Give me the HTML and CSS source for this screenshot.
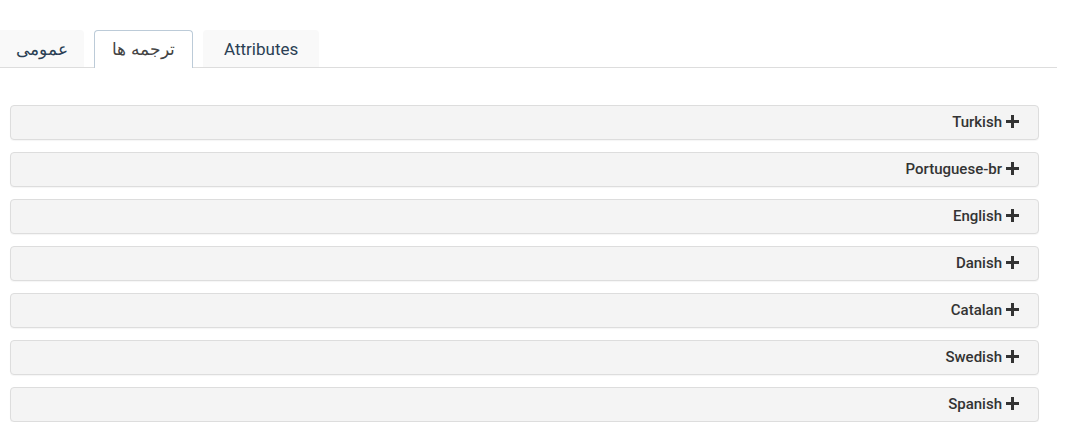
FILE: index.html
```html
<!DOCTYPE html>
<html lang="fa">
<head>
    <meta charset="UTF-8">
    <title>Translations</title>
    <link rel="stylesheet" href="styles.css">
</head>
<body>

    <!-- Tabs -->
    <div class="tabs">
        <a href="#" class="tab">عمومی</a>
        <a href="#" class="tab active">ترجمه ها</a>
        <a href="#" class="tab">Attributes</a>
    </div>

    <!-- Language panels -->
    <div class="panels">
        <div class="panel"><span>Turkish</span><b class="plus"></b></div>
        <div class="panel"><span>Portuguese-br</span><b class="plus"></b></div>
        <div class="panel"><span>English</span><b class="plus"></b></div>
        <div class="panel"><span>Danish</span><b class="plus"></b></div>
        <div class="panel"><span>Catalan</span><b class="plus"></b></div>
        <div class="panel"><span>Swedish</span><b class="plus"></b></div>
        <div class="panel"><span>Spanish</span><b class="plus"></b></div>
    </div>

</body>
</html>
```

FILE: styles.css
```css
body {
    font-family: Roboto, "DejaVu Sans", sans-serif;
    margin: 0;
    padding: 30px 0 0 0;
    background: #fff;
    color: #333;
}

/* Tabs */
.tabs {
    display: flex;
    gap: 10px;
    width: 1057px;
    border-bottom: 1px solid #dddddd;
}

.tab {
    display: block;
    height: 37px;
    line-height: 36px;
    padding: 0 20px;
    font-size: 17px;
    color: #2a3f54;
    text-decoration: none;
    background: #f9f9f9;
    border: 1px solid #f9f9f9;
    border-bottom: none;
    border-radius: 4px 4px 0 0;
    box-sizing: border-box;
}

.tab:first-child {
    width: 84px;
    text-align: center;
    padding: 0;
    font-weight: 300;
    border-radius: 0 4px 0 0;
}

.tab.active {
    width: 99px;
    padding: 0;
    text-align: center;
    background: #fff;
    color: #444;
    font-weight: 300;
    border-color: #bccbd8;
    height: 38px;
    margin-bottom: -1px;
}

/* Panels */
.panels {
    display: flex;
    flex-direction: column;
    gap: 12px;
    margin: 37px 0 0 10px;
    width: 1029px;
}

.panel {
    display: flex;
    justify-content: flex-end;
    align-items: center;
    gap: 4px;
    height: 35px;
    box-sizing: border-box;
    padding-right: 19px;
    padding-bottom: 2px;
    background: #f4f4f4;
    border: 1px solid #dddddd;
    border-radius: 4px;
    box-shadow: 0 1px 1px rgba(0, 0, 0, 0.04);
    font-size: 15px;
    font-weight: 500;
}

.plus {
    position: relative;
    width: 13px;
    height: 13px;
}

.plus::before,
.plus::after {
    content: '';
    position: absolute;
    background: #333;
}

.plus::before {
    left: 0;
    top: 5px;
    width: 13px;
    height: 3px;
}

.plus::after {
    left: 5px;
    top: 0;
    width: 3px;
    height: 13px;
}
```
